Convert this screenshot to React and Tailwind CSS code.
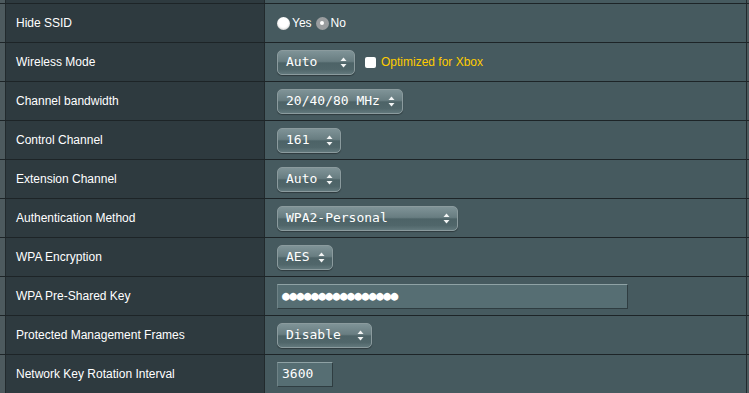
import React from 'react';

const mono = { fontFamily: '"DejaVu Sans Mono", "Liberation Mono", monospace' };

const Arrows = () => (
  <svg width="7" height="11" viewBox="0 0 7 11" className="shrink-0">
    <path d="M3.5 0.5 L6.5 4 L0.5 4 Z" fill="#f2f4f4" />
    <path d="M3.5 10.5 L6.5 7 L0.5 7 Z" fill="#f2f4f4" />
  </svg>
);

const Select = ({ value, width }) => (
  <div
    className="relative flex h-[25px] items-center justify-between rounded-[5px] border border-[#8b9b9e] pl-[8px] pr-[7px] text-[13px] text-white shadow-[0_1px_1px_rgba(0,0,0,0.35)] bg-[linear-gradient(to_bottom,#7f9397_0%,#687d81_45%,#4d6367_52%,#50666a_80%,#62787c_100%)]"
    style={{ width, ...mono }}
  >
    <span className="-mt-px leading-none">{value}</span>
    <Arrows />
  </div>
);

const TextInput = ({ value, width, dots }) => (
  <div
    className={`flex h-[25px] items-center border border-[#2f3d41] border-t-[#8fa2a5] border-l-[#6f8387] bg-[#566e73] px-[4px] text-[13px] text-white ${dots ? 'tracking-[-0.6px]' : ''}`}
    style={{ width, ...mono }}
  >
    {value}
  </div>
);

const Row = ({ label, children }) => (
  <div className="flex h-[39px] border-t border-[#1d2427]">
    <div className="w-[5px] bg-[#4d5a5e]" />
    <div className="w-px bg-[#222a2d]" />
    <div className="flex w-[258px] items-center bg-[#2e3a3f] pl-[10px] text-[12px] text-white">{label}</div>
    <div className="w-px bg-[#222a2d]" />
    <div className="flex w-[481px] items-center gap-[6px] bg-[#465a5f] pl-[12px]">{children}</div>
    <div className="w-px bg-[#222a2d]" />
    <div className="w-[2px] bg-[#4d5a5e]" />
  </div>
);

export default function App() {
  return (
    <div className="h-[393px] w-[749px] overflow-hidden" style={{ fontFamily: '"Liberation Sans", Arial, sans-serif' }}>
      <div className="flex h-[3px]">
        <div className="w-[5px] bg-[#4d5a5e]" />
        <div className="w-px bg-[#222a2d]" />
        <div className="w-[258px] bg-[#2e3a3f]" />
        <div className="w-px bg-[#222a2d]" />
        <div className="w-[481px] bg-[#465a5f]" />
        <div className="w-px bg-[#222a2d]" />
        <div className="w-[2px] bg-[#4d5a5e]" />
      </div>

      <Row label="Hide SSID">
        <div className="flex items-center text-[12px] text-white">
          <span className="h-[13px] w-[13px] rounded-full bg-white shadow-[inset_0_-1px_2px_rgba(0,0,0,0.2)]" />
          <span className="ml-[2px]">Yes</span>
          <span className="ml-[4px] flex h-[13px] w-[13px] items-center justify-center rounded-full bg-[#9a9d9f]">
            <span className="h-[4px] w-[4px] rounded-full bg-white" />
          </span>
          <span className="ml-[2px]">No</span>
        </div>
      </Row>

      <Row label="Wireless Mode">
        <Select value="Auto" width={78} />
        <div className="ml-[4px] flex items-center">
          <span className="h-[11px] w-[11px] rounded-[2px] bg-white" />
          <span className="ml-[5px] text-[12px] text-[#ffcc00]">Optimized for Xbox</span>
        </div>
      </Row>

      <Row label="Channel bandwidth">
        <Select value="20/40/80 MHz" width={126} />
      </Row>

      <Row label="Control Channel">
        <Select value="161" width={64} />
      </Row>

      <Row label="Extension Channel">
        <Select value="Auto" width={64} />
      </Row>

      <Row label="Authentication Method">
        <Select value="WPA2-Personal" width={181} />
      </Row>

      <Row label="WPA Encryption">
        <Select value="AES" width={56} />
      </Row>

      <Row label="WPA Pre-Shared Key">
        <TextInput value="●●●●●●●●●●●●●●●●" width={351} dots />
      </Row>

      <Row label="Protected Management Frames">
        <Select value="Disable" width={95} />
      </Row>

      <Row label="Network Key Rotation Interval">
        <TextInput value="3600" width={56} />
      </Row>
    </div>
  );
}
